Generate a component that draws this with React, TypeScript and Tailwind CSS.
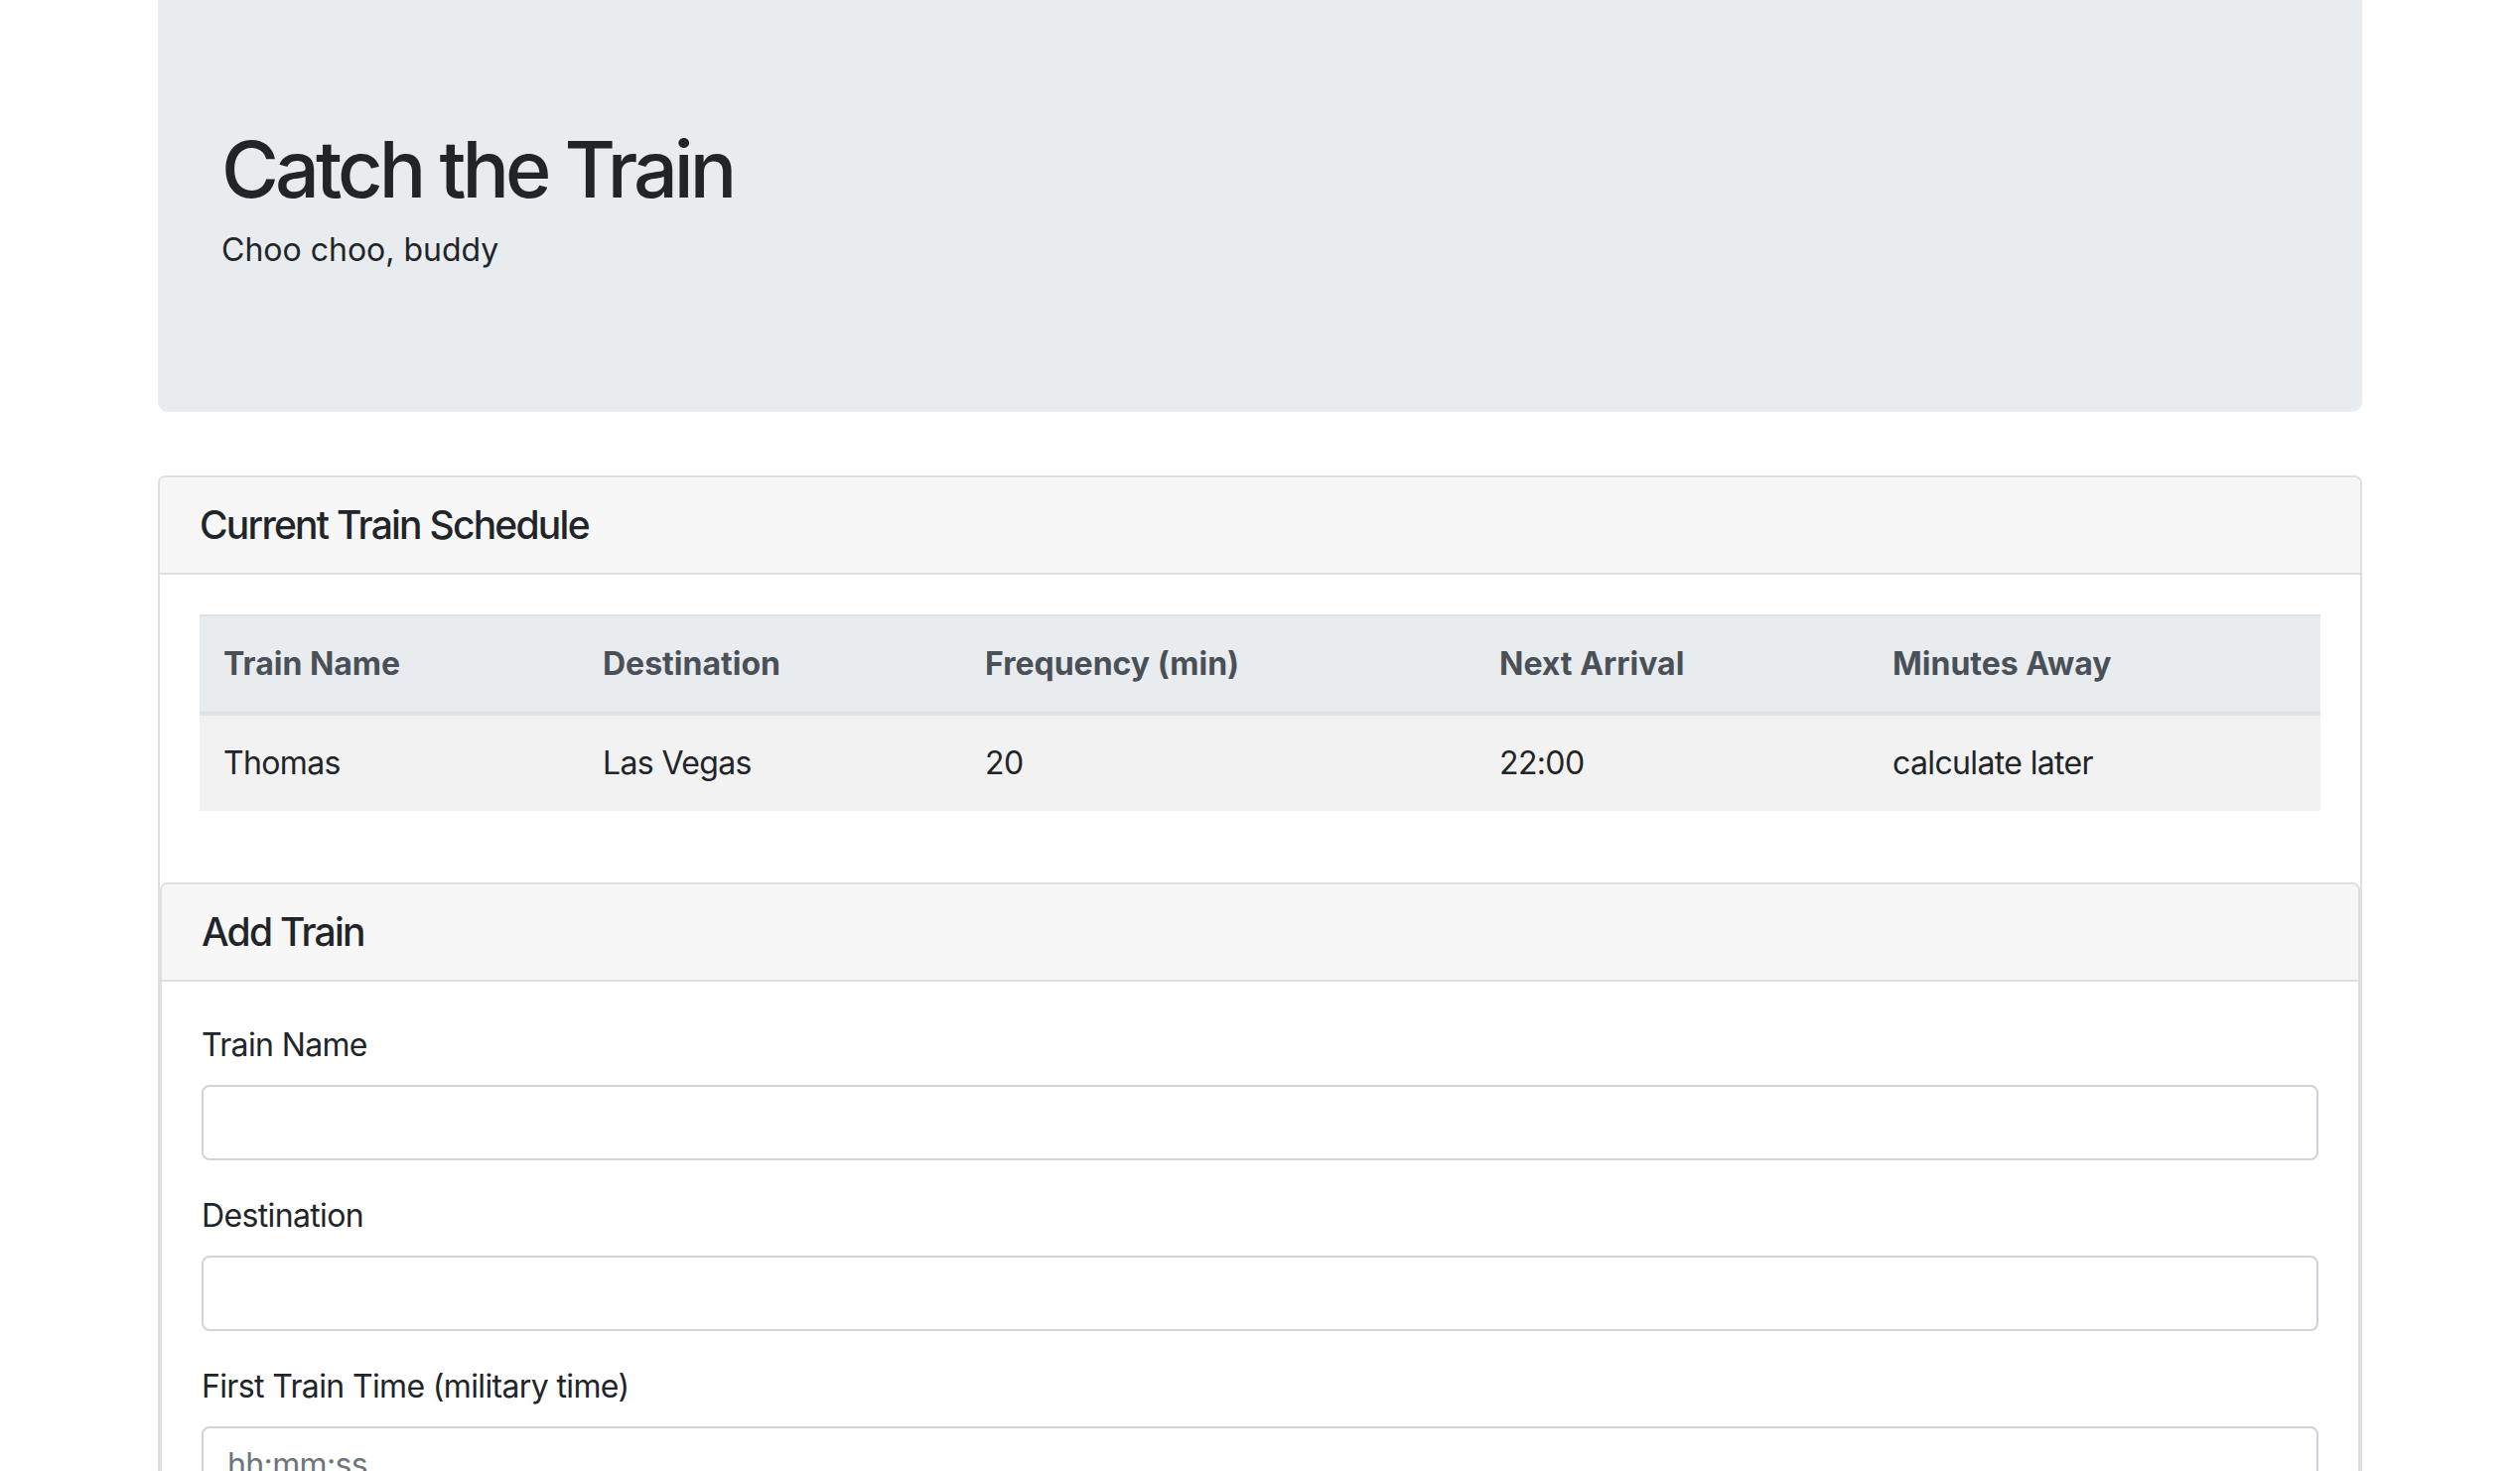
import { useState } from 'react'

const font = { fontFamily: 'Inter, "Noto Sans", sans-serif' }

const trains = [
  { name: 'Thomas', destination: 'Las Vegas', frequency: '20', next: '22:00', away: 'calculate later' },
]

const fields = [
  { id: 'name', label: 'Train Name', placeholder: '' },
  { id: 'destination', label: 'Destination', placeholder: '' },
  { id: 'first', label: 'First Train Time (military time)', placeholder: 'hh:mm:ss' },
  { id: 'frequency', label: 'Frequency (min)', placeholder: '' },
]

export default function App() {
  const [values, setValues] = useState<Record<string, string>>({})

  return (
    <div className="min-h-screen bg-white text-[#212529]" style={font}>
      <div className="mx-auto w-[2280px] px-[30px]">
        <div className="rounded-b-[10px] bg-[#e9ecef] px-16 pt-[122px] pb-[139px]">
          <h1 className="mb-[10px] text-[79px] leading-[96px] font-medium tracking-[-0.05em]">Catch the Train</h1>
          <p className="text-[32px] leading-[48px]">Choo choo, buddy</p>
        </div>

        <div className="mt-16 rounded-lg border-2 border-[#dfdfdf]">
          <div className="rounded-t-md border-b-2 border-[#dfdfdf] bg-[#f7f7f7] px-10 py-6">
            <h5 className="text-[39px] leading-[48px] font-medium tracking-[-0.045em]">Current Train Schedule</h5>
          </div>
          <div className="p-10">
            <table className="mb-8 w-full border-collapse text-left text-[32px] leading-[48px]">
              <thead>
                <tr className="border-t-2 border-b-4 border-[#dee2e6] bg-[#e9ecef] text-[#495057]">
                  <th className="w-[382px] p-6 font-bold">Train Name</th>
                  <th className="w-[385px] p-6 font-bold">Destination</th>
                  <th className="w-[518px] p-6 font-bold">Frequency (min)</th>
                  <th className="w-[396px] p-6 font-bold">Next Arrival</th>
                  <th className="p-6 font-bold">Minutes Away</th>
                </tr>
              </thead>
              <tbody className="tracking-[-0.02em]">
                {trains.map((t) => (
                  <tr key={t.name} className="bg-[#f2f2f2]">
                    <td className="p-6">{t.name}</td>
                    <td className="p-6">{t.destination}</td>
                    <td className="p-6">{t.frequency}</td>
                    <td className="p-6">{t.next}</td>
                    <td className="p-6">{t.away}</td>
                  </tr>
                ))}
              </tbody>
            </table>
          </div>

          <div className="rounded-lg border-2 border-[#dfdfdf]">
            <div className="rounded-t-md border-b-2 border-[#dfdfdf] bg-[#f7f7f7] px-10 py-6">
              <h5 className="text-[39px] leading-[48px] font-medium tracking-[-0.045em]">Add Train</h5>
            </div>
            <form className="p-10" onSubmit={(e) => e.preventDefault()}>
              {fields.map((f) => (
                <div key={f.id} className="mb-8">
                  <label htmlFor={f.id} className="mb-4 block text-[32px] leading-[48px] tracking-[-0.02em]">
                    {f.label}
                  </label>
                  <input
                    id={f.id}
                    type="text"
                    placeholder={f.placeholder}
                    value={values[f.id] || ''}
                    onChange={(e) => setValues({ ...values, [f.id]: e.target.value })}
                    className="block h-[76px] w-full rounded-lg border-2 border-[#ced4da] bg-white px-6 py-3 text-[32px] leading-[48px] tracking-[-0.02em] text-[#495057] placeholder:text-[#6c757d] outline-none"
                  />
                </div>
              ))}
              <button
                type="submit"
                className="rounded-lg border-2 border-[#007bff] bg-[#007bff] px-6 py-3 text-[32px] leading-[48px] text-white"
              >
                Submit
              </button>
            </form>
          </div>
        </div>
      </div>
    </div>
  )
}
